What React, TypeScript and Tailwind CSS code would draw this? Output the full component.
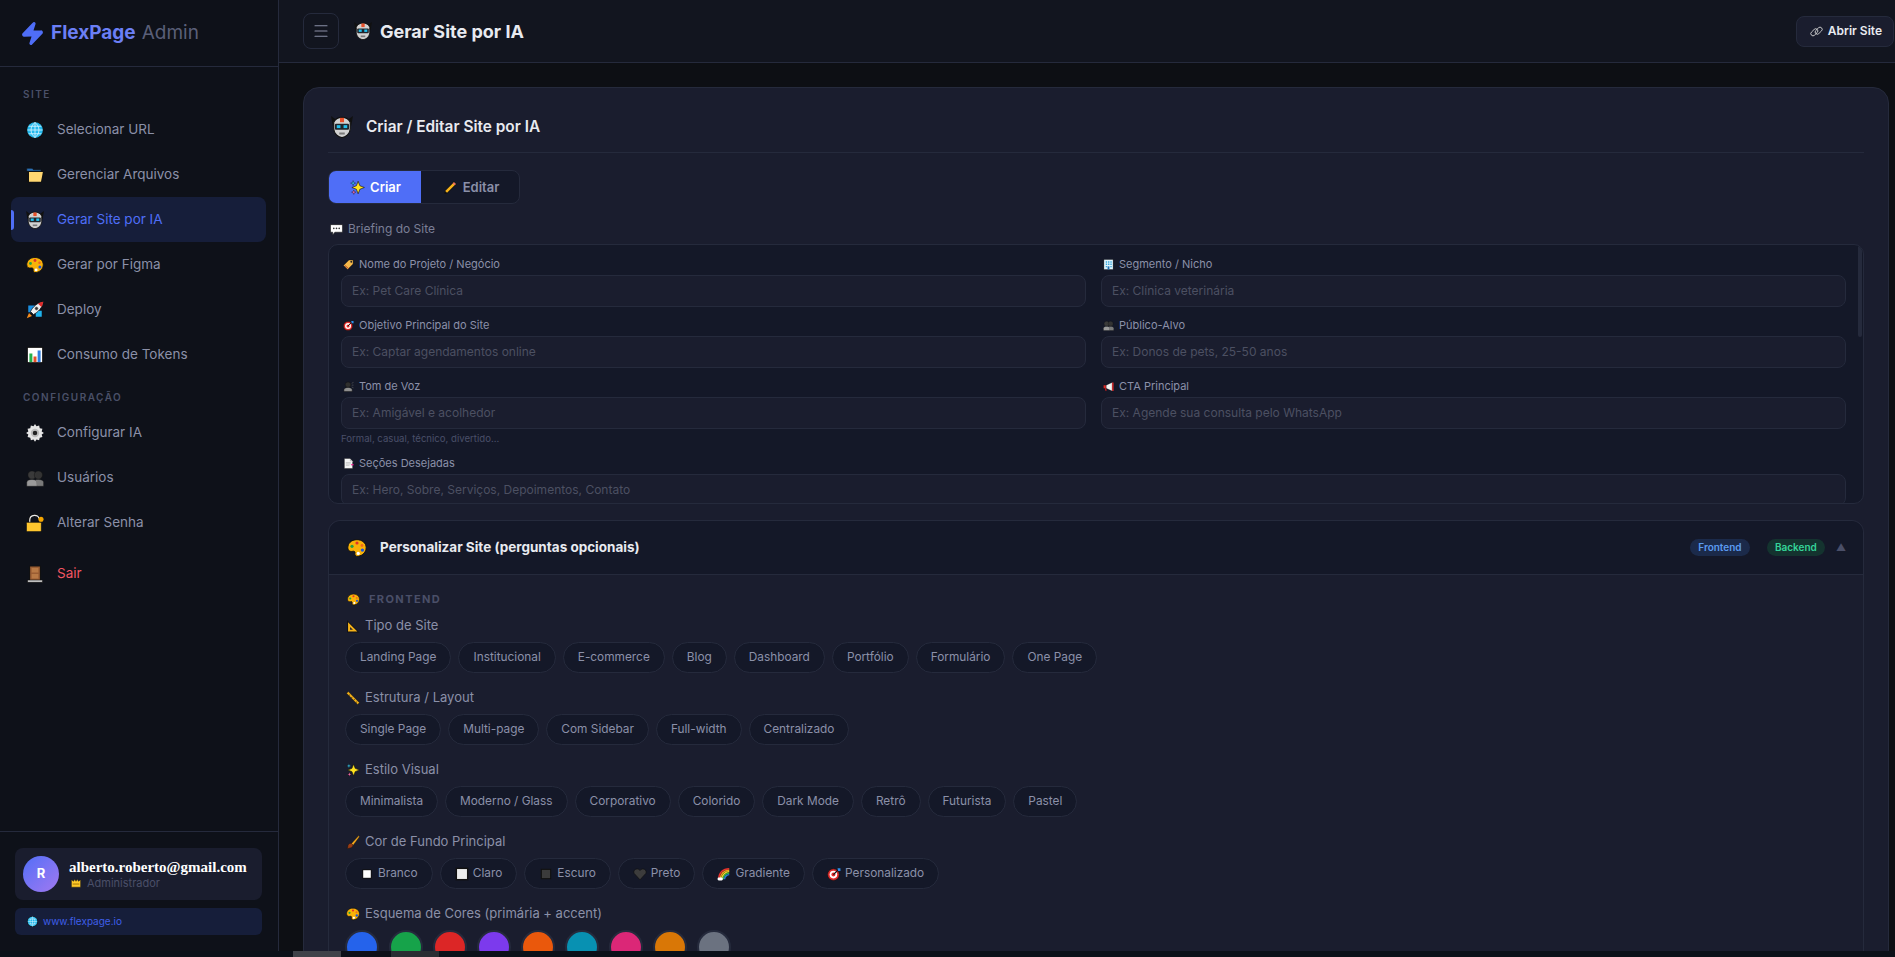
import React from 'react';
import { Zap, Menu } from 'lucide-react';

type IconName =
  | 'globe' | 'folder' | 'robot' | 'palette' | 'rocket' | 'chart' | 'gear' | 'users' | 'lock' | 'door'
  | 'crown' | 'sparkles' | 'pencil' | 'speech' | 'tag' | 'building' | 'target' | 'bust' | 'megaphone'
  | 'page' | 'triangle' | 'ruler' | 'brush' | 'heart' | 'white' | 'light' | 'dark' | 'rainbow' | 'link';

const drawings: Record<IconName, React.ReactNode> = {
  globe: (
    <>
      <circle cx="12" cy="12" r="11.5" fill="#111" />
      <circle cx="12" cy="12" r="10.5" fill="#22b8ec" />
      <path d="M2 12h20M3.5 7h17M3.5 17h17M12 2v20M12 2c-7 5-7 15 0 20M12 2c7 5 7 15 0 20" stroke="#d8f4ff" strokeWidth="1.1" fill="none" />
    </>
  ),
  folder: (
    <>
      <path d="M1 7V3h7l2 2h10v2z" fill="#2a6fb5" stroke="#111" strokeWidth=".8" />
      <path d="M1 22V7h3v14z" fill="#111" />
      <path d="M3 22V7h21l-3 15z" fill="#111" />
      <path d="M4 21V8h18.5L20 21z" fill="#ffd772" />
    </>
  ),
  robot: (
    <>
      <path d="M0 0L2 11 7 5zM24 0L22 11 17 5z" fill="#111" />
      <path d="M3 7c1.500-4 5-5.500 9-5.500S19.500 3 21 7v7c0 5-5 9.500-9 9.500S3 19 3 14z" fill="#d2d2d2" stroke="#111" strokeWidth="1.2" />
      <rect x="9.800" y="2" width="4.400" height="4.800" fill="#e8502a" />
      <rect x="4.300" y="8.500" width="15.400" height="6.500" rx="1.200" fill="#20242a" />
      <rect x="6.300" y="10" width="4" height="3.200" fill="#22c0ee" />
      <rect x="13.700" y="10" width="4" height="3.200" fill="#22c0ee" />
      <rect x="9" y="18" width="6" height="2.200" fill="#7a7a7a" />
    </>
  ),
  palette: (
    <>
      <path d="M12 2C5 2 1 6.500 1 11.500c0 4 3 5 5.500 4.500 2.500-.5 3.500.5 3 2.500-.5 2.500 1.500 4 4 3.500C19 21 23 17 23 11.500 23 6 18 2 12 2z" fill="#f9b208" stroke="#111" strokeWidth="1.2" />
      <circle cx="6" cy="10" r="1.9" fill="#25a244" />
      <circle cx="12" cy="6" r="1.9" fill="#e0352b" />
      <circle cx="18" cy="9" r="1.7" fill="#f06a1d" />
      <circle cx="18.5" cy="14.5" r="2" fill="#1e55d8" />
      <circle cx="13.5" cy="18.5" r="1.9" fill="#fff" />
    </>
  ),
  rocket: (
    <>
      <path d="M1 23l3-7 4 4z" fill="#f48b1d" />
      <rect x="3" y="6" width="9" height="9" fill="#1b8fe0" />
      <rect x="13" y="13" width="8" height="8" fill="#1fb3ec" />
      <path d="M6 14C9 8 15 2 23 1c-1 8-7 14-13 17z" fill="#f0f0f0" stroke="#111" strokeWidth="1" />
      <path d="M16 3.500C18 2 21 1.300 23 1c-.3 2-1 5-2.500 7z" fill="#df2a2a" />
      <circle cx="14" cy="10" r="2.200" fill="#333" stroke="#aaa" strokeWidth=".7" />
    </>
  ),
  chart: (
    <>
      <rect x="1" y="1" width="22" height="22" fill="#111" />
      <rect x="2.5" y="2.5" width="19" height="19" fill="#fff" />
      <rect x="4.5" y="10" width="4" height="11.5" fill="#22b14c" />
      <rect x="10" y="14" width="4" height="7.5" fill="#e5512b" />
      <rect x="15.5" y="6" width="4" height="15.5" fill="#2f7fe0" />
    </>
  ),
  gear: (
    <>
      <path d="M12 1l2 3 3.500-1 .8 3.600 3.600.8-1 3.500 3 2-3 2 1 3.500-3.600.8-.8 3.600-3.500-1-2 3-2-3-3.500 1-.8-3.600-3.600-.8 1-3.500-3-2 3-2-1-3.500 3.600-.8.800-3.600 3.500 1z" fill="#e6e6e6" transform="translate(0 -1)" />
      <circle cx="12" cy="12" r="5.6" fill="#bdbdbd" />
      <circle cx="12" cy="12" r="3" fill="#222" />
    </>
  ),
  users: (
    <>
      <circle cx="8" cy="8" r="5.5" fill="#3a3a3a" stroke="#111" strokeWidth=".6" />
      <circle cx="16.5" cy="8" r="5.5" fill="#333" stroke="#111" strokeWidth=".6" />
      <path d="M1 23v-5c0-3 3-4 7-4s7 1 7 4v5z" fill="#9a9a9a" stroke="#111" strokeWidth=".6" />
      <path d="M13 14.200c1-.2 2-.2 3.500-.2 4 0 7 1 7 4v5H15" fill="#7a7a7a" stroke="#111" strokeWidth=".6" />
    </>
  ),
  lock: (
    <>
      <path d="M5 12V8c0-8 12-8 12-2" fill="none" stroke="#111" strokeWidth="3.4" />
      <path d="M5 12V8c0-8 12-8 12-2" fill="none" stroke="#e9e9e9" strokeWidth="1.6" />
      <rect x="0.5" y="11" width="20" height="12.5" rx="1.5" fill="#ffc72e" stroke="#111" />
      <circle cx="20" cy="7" r="3.4" fill="#f5a500" />
    </>
  ),
  door: (
    <>
      <rect x="4" y="1" width="16" height="19" fill="#111" />
      <rect x="5.5" y="2" width="13" height="18" fill="#9a5d33" />
      <rect x="7.5" y="4" width="9" height="6" fill="#b87945" />
      <rect x="7.5" y="12" width="9" height="6" fill="#b87945" />
      <rect x="2" y="20" width="20" height="3" fill="#c9c9c9" stroke="#111" strokeWidth=".8" />
    </>
  ),
  crown: (
    <>
      <path d="M1 22V4l5 4 3-5 3 5 3-5 3 5 5-4v18z" fill="#ffc928" stroke="#111" strokeWidth="1" />
      <rect x="4" y="13" width="16" height="3" fill="#b8860b" />
    </>
  ),
  sparkles: (
    <>
      <path d="M13 2l2.800 7.200L23 12l-7.200 2.800L13 22l-2.800-7.200L3 12l7.200-2.800z" fill="#ffe21f" stroke="#111" strokeWidth="1" />
      <path d="M5 1l1 3 3 1-3 1-1 3-1-3-3-1 3-1z" fill="#39c7ee" stroke="#111" strokeWidth=".6" />
      <path d="M6 16l1 2.500 2.500 1-2.500 1-1 2.500-1-2.500-2.500-1 2.500-1z" fill="#f06aa8" stroke="#111" strokeWidth=".6" />
    </>
  ),
  pencil: (
    <>
      <path d="M17.500 2L22 6.500 7 21.500 2 22.500l1-5z" fill="#111" />
      <path d="M17.500 3.500l3 3L6.500 20.500l-3-3z" fill="#f6b21b" />
      <path d="M17.500 3.500l3 3-2 2-3-3z" fill="#ee6a6a" />
    </>
  ),
  speech: (
    <>
      <path d="M1 3h22v14H9l-4 5v-5H1z" fill="#fff" stroke="#111" strokeWidth="1" />
      <circle cx="7" cy="10" r="1.5" fill="#333" />
      <circle cx="12" cy="10" r="1.5" fill="#333" />
      <circle cx="17" cy="10" r="1.5" fill="#333" />
    </>
  ),
  tag: (
    <>
      <path d="M13 2h9v9L10 23 1 14z" fill="#f5b84a" stroke="#111" strokeWidth="1" />
      <circle cx="18" cy="6" r="2" fill="#222" />
      <path d="M4 14l8 7" stroke="#b23a2a" strokeWidth="2" />
    </>
  ),
  building: (
    <>
      <rect x="2" y="1" width="20" height="22" fill="#dff3fb" stroke="#111" strokeWidth=".8" />
      <path d="M6 5h3v3H6zM11 5h3v3h-3zM16 5h3v3h-3zM6 10h3v3H6zM11 10h3v3h-3zM16 10h3v3h-3zM6 15h3v3H6zM16 15h3v3h-3z" fill="#36a6dc" />
      <rect x="10" y="16" width="4" height="7" fill="#1d6fb0" />
    </>
  ),
  target: (
    <>
      <circle cx="11" cy="13" r="10" fill="#e12b2b" stroke="#111" strokeWidth="1" />
      <circle cx="11" cy="13" r="6.5" fill="#fff" />
      <circle cx="11" cy="13" r="3.4" fill="#e12b2b" />
      <path d="M11 13L21 3" stroke="#111" strokeWidth="2" />
      <path d="M18 2h5v5h-4z" fill="#2f8fe8" />
    </>
  ),
  bust: (
    <>
      <circle cx="11" cy="8" r="6" fill="#2f2f2f" stroke="#111" />
      <path d="M2 23v-4c0-3 4-5 9-5s9 2 9 5v4z" fill="#8f8f8f" stroke="#111" />
      <path d="M19 5l4-2M19 9h4M19 13l4 2" stroke="#666" strokeWidth="1.2" />
    </>
  ),
  megaphone: (
    <>
      <path d="M1 9h6v7H1z" fill="#e12b2b" stroke="#111" strokeWidth=".6" />
      <path d="M7 9l13-6v19L7 16z" fill="#f3f3f3" stroke="#111" strokeWidth=".6" />
      <path d="M20 3h3v19h-3z" fill="#e12b2b" />
      <path d="M4 16h3l1 5H5z" fill="#c41f1f" />
    </>
  ),
  page: (
    <>
      <path d="M3 1h12l6 6v16H3z" fill="#f4f4f4" stroke="#111" strokeWidth=".8" />
      <path d="M15 1l6 6h-6z" fill="#bdbdbd" />
      <path d="M6 10h11M6 13h11M6 16h8" stroke="#9a9a9a" strokeWidth="1" />
      <rect x="18" y="13" width="5" height="3" fill="#e91e8c" />
    </>
  ),
  triangle: (
    <>
      <path d="M2 2v21h21z" fill="#111" />
      <path d="M3.500 5.500v16h16z" fill="#f5b21a" />
      <path d="M7 13.500v5h5z" fill="#1c2030" />
    </>
  ),
  ruler: (
    <>
      <path d="M4 1L23 20l-3 3L1 4z" fill="#f5b21a" stroke="#111" strokeWidth=".8" />
      <path d="M7 6l-2 2M11 10l-2 2M15 14l-2 2M19 18l-2 2" stroke="#111" strokeWidth="1" />
    </>
  ),
  brush: (
    <>
      <path d="M22 1L9 15l3 3L23 3z" fill="#f5a81c" stroke="#111" strokeWidth=".6" />
      <path d="M9 14c-4 0-6 3-6 6l-1 3c4 0 10-1 10-6z" fill="#9a3d14" stroke="#111" strokeWidth=".8" />
    </>
  ),
  heart: (
    <path d="M12 22L2 11C-1 5 8 0 12 6c4-6 13-1 10 5z" fill="#3c3c3c" stroke="#111" strokeWidth="1.2" />
  ),
  white: (
    <>
      <rect x="4" y="4" width="16" height="16" fill="#111" />
      <rect x="5.5" y="5.5" width="13" height="13" fill="#fff" />
    </>
  ),
  light: (
    <>
      <rect x="1" y="1" width="22" height="22" fill="#111" />
      <rect x="3.5" y="3.5" width="17" height="17" fill="#ececec" />
    </>
  ),
  dark: (
    <>
      <rect x="3" y="3" width="18" height="18" fill="#111" />
      <rect x="5" y="5" width="14" height="14" fill="#3b3b3b" />
    </>
  ),
  rainbow: (
    <>
      <path d="M3 21C3 10 10 3 21 3" fill="none" stroke="#e8322c" strokeWidth="2.4" />
      <path d="M5.500 21C5.500 12 12 5.500 21 5.500" fill="none" stroke="#f5a21a" strokeWidth="2.4" />
      <path d="M8 21C8 14 14 8 21 8" fill="none" stroke="#f6e12a" strokeWidth="2.4" />
      <path d="M10.500 21C10.500 15.500 15.500 10.500 21 10.500" fill="none" stroke="#2fb54a" strokeWidth="2.4" />
      <path d="M13 21C13 17 17 13 21 13" fill="none" stroke="#2f7fe0" strokeWidth="2.4" />
      <rect x="1" y="18" width="9" height="5" rx="2" fill="#fff" />
    </>
  ),
  link: (
    <>
      <rect x="0.5" y="9.5" width="15" height="8" rx="4" transform="rotate(-45 8 13.5)" fill="none" stroke="#d6d6d6" strokeWidth="1.6" />
      <rect x="8.5" y="6.5" width="15" height="8" rx="4" transform="rotate(-45 16 10.5)" fill="none" stroke="#d6d6d6" strokeWidth="1.6" />
    </>
  ),
};

function Emoji({ name, className }: { name: IconName; className: string }) {
  return (
    <svg viewBox="0 0 24 24" className={`shrink-0 ${className}`}>
      {drawings[name]}
    </svg>
  );
}

function NavItem({ icon, label, active, danger }: { icon: IconName; label: string; active?: boolean; danger?: boolean }) {
  return (
    <div
      className={`relative flex h-[45px] items-center gap-[13px] rounded-lg pl-[15px] text-[13.5px] ${
        active ? 'bg-[#161e3a] text-[#4f6ef7]' : danger ? 'text-[#f25563]' : 'text-[#8b90a8]'
      }`}
    >
      {active && <span className="absolute left-0 top-[13px] h-[20px] w-[3px] rounded-r bg-[#4f6ef7]" />}
      <Emoji name={icon} className="size-[18px]" />
      {label}
    </div>
  );
}

function Sidebar() {
  return (
    <aside className="flex h-full w-[279px] shrink-0 flex-col border-r border-[#252a3c] bg-[#0e1119]">
      <div className="flex h-[67px] shrink-0 items-center gap-[6px] border-b border-[#252a3c] pl-[20px] pt-[1px]">
        <Zap className="size-[25px] fill-[#4f6ef7] text-[#4f6ef7]" />
        <span className="text-[19px] font-bold text-[#6b7ff5]">FlexPage</span>
        <span className="text-[19px] text-[#5a5f78]">Admin</span>
      </div>
      <nav className="flex flex-1 flex-col px-[11px] pr-[12px]">
        <p className="mb-[5px] ml-[12px] mt-[20px] text-[10px] font-semibold uppercase tracking-[1.5px] text-[#4a5068]">Site</p>
        <NavItem icon="globe" label="Selecionar URL" />
        <NavItem icon="folder" label="Gerenciar Arquivos" />
        <NavItem icon="robot" label="Gerar Site por IA" active />
        <NavItem icon="palette" label="Gerar por Figma" />
        <NavItem icon="rocket" label="Deploy" />
        <NavItem icon="chart" label="Consumo de Tokens" />
        <p className="mb-[5px] ml-[12px] mt-[13px] text-[10px] font-semibold uppercase tracking-[1.5px] text-[#4a5068]">Configuração</p>
        <NavItem icon="gear" label="Configurar IA" />
        <NavItem icon="users" label="Usuários" />
        <NavItem icon="lock" label="Alterar Senha" />
        <div className="mt-[6px]">
          <NavItem icon="door" label="Sair" danger />
        </div>
      </nav>
      <div className="flex h-[126px] shrink-0 flex-col gap-2 border-t border-[#252a3c] pl-[15px] pr-[16px] pt-4">
        <div className="flex h-[52px] items-center gap-[10px] rounded-lg bg-[#1a1d2e] pl-2">
          <div className="flex size-9 items-center justify-center rounded-full bg-gradient-to-br from-[#4f6ef7] to-[#a078f0] text-[13px] font-bold text-white">R</div>
          <div className="flex flex-col">
            <span className="font-['Liberation_Serif',serif] text-[15px] font-bold leading-[17px] text-white">alberto.roberto@gmail.com</span>
            <span className="flex items-center gap-[6px] pl-[2px] text-[11px] leading-[14px] text-[#4a4f68]">
              <Emoji name="crown" className="size-[10px]" />
              Administrador
            </span>
          </div>
        </div>
        <div className="flex h-[27px] items-center gap-[5px] rounded-md bg-[#161e3a] pl-3 text-[10px] text-[#3f5fe8]">
          <Emoji name="globe" className="size-[11px]" />
          www.flexpage.io
        </div>
      </div>
    </aside>
  );
}

function Field({ icon, label, placeholder, hint }: { icon: IconName; label: string; placeholder: string; hint?: string }) {
  return (
    <div className="flex flex-col">
      <label className="mb-[4px] flex h-[14px] items-center gap-[5px] pl-[2px] text-[11px] text-[#8b90a8]">
        <Emoji name={icon} className="size-[11px]" />
        {label}
      </label>
      <div className="flex h-[32px] items-center rounded-lg border border-[#252a3c] bg-[#1a1d2e] pl-[10px] text-[12px] text-[#4c5062]">
        {placeholder}
      </div>
      {hint && <span className="mt-[3px] h-[13px] text-[9.6px] leading-[13px] text-[#4a4f68]">{hint}</span>}
    </div>
  );
}

function Pill({ icon, label }: { icon?: IconName; label: string }) {
  return (
    <span className="flex h-[31px] items-center gap-[4px] rounded-full border border-[#252a3c] bg-[#141828] px-[14px] text-[11.85px] text-[#8b90a8]">
      {icon && <Emoji name={icon} className="size-[14px]" />}
      {label}
    </span>
  );
}

function GroupTitle({ icon, title }: { icon: IconName; title: string }) {
  return (
    <div className="mb-[8px] flex h-[16px] items-center gap-[5px] pl-px text-[13px] text-[#8b90a8]">
      <Emoji name={icon} className="size-[14px]" />
      {title}
    </div>
  );
}

function PillGroup({ icon, title, items }: { icon: IconName; title: string; items: string[] }) {
  return (
    <div className="mb-[17px]">
      <GroupTitle icon={icon} title={title} />
      <div className="flex gap-[7px]">
        {items.map((item) => (
          <Pill key={item} label={item} />
        ))}
      </div>
    </div>
  );
}

const backgrounds: [IconName, string][] = [
  ['white', 'Branco'],
  ['light', 'Claro'],
  ['dark', 'Escuro'],
  ['heart', 'Preto'],
  ['rainbow', 'Gradiente'],
  ['target', 'Personalizado'],
];

const swatches = ['bg-[#2563eb]', 'bg-[#16a34a]', 'bg-[#dc2626]', 'bg-[#7c3aed]', 'bg-[#ea580c]', 'bg-[#0891b2]', 'bg-[#db2777]', 'bg-[#d97706]', 'bg-[#6b7280]'];

export default function App() {
  return (
    <div className="relative flex h-screen w-full overflow-hidden bg-[#0d0f14] font-['Inter',sans-serif]">
      <Sidebar />
      <div className="flex h-full min-w-0 flex-1 flex-col">
        <header className="flex h-[63px] shrink-0 items-center border-b border-[#252a3c] bg-[#12151f] pl-6 pr-px">
          <button className="flex size-9 items-center justify-center rounded-lg border border-[#252a3c] text-[#8b90a8]">
            <Menu className="size-[18px]" strokeWidth={1.5} />
          </button>
          <Emoji name="robot" className="ml-[15px] size-[18px]" />
          <h1 className="ml-2 text-[18px] font-bold text-[#e8eaf0]">Gerar Site por IA</h1>
          <button className="ml-auto flex h-[31px] items-center gap-[5px] rounded-lg border border-[#252a3c] bg-[#1a1d2e] pl-[13px] pr-[11px] text-[12px] font-semibold text-[#e8eaf0]">
            <Emoji name="link" className="size-[13px]" />
            Abrir Site
          </button>
        </header>
        <main className="min-h-0 flex-1 overflow-hidden pl-6 pr-[6px] pt-6">
          <section className="rounded-2xl border border-[#252a3c] bg-[#1a1d2e] px-6 pt-[28px]">
            <div className="flex h-[22px] items-center gap-[13px] pl-[3px]">
              <Emoji name="robot" className="size-[22px]" />
              <h2 className="text-[15.4px] font-semibold text-[#e8eaf0]">Criar / Editar Site por IA</h2>
            </div>
            <div className="mt-[14px] border-t border-[#252a3c]" />
            <div className="mt-[17px] flex h-[34px] w-[192px] overflow-hidden rounded-lg border border-[#252a3c] bg-[#141828] pt-px text-[13px] font-semibold">
              <span className="-mt-px flex w-[92px] items-center justify-center gap-[5px] bg-[#4f6ef7] pl-px pt-px text-white">
                <Emoji name="sparkles" className="size-[15px]" />
                Criar
              </span>
              <span className="flex flex-1 items-center justify-center gap-[5px] pl-[2px] text-[#8b90a8]">
                <Emoji name="pencil" className="size-[15px]" />
                Editar
              </span>
            </div>
            <div className="mt-[17px] flex h-[16px] items-center gap-[5px] pl-[2px] text-[12px] text-[#7a7f96]">
              <Emoji name="speech" className="size-[13px]" />
              Briefing do Site
            </div>
            <div className="relative mt-[7px] h-[260px] overflow-hidden rounded-[10px] border border-[#252a3c] bg-[#141828] pl-[12px] pr-[17px] pt-[12px]">
              <span className="absolute right-px top-0 h-[92px] w-[4px] rounded bg-[#252a3c]" />
              <div className="grid grid-cols-[745px_1fr] gap-x-[15px] gap-y-[11px]">
                <Field icon="tag" label="Nome do Projeto / Negócio" placeholder="Ex: Pet Care Clínica" />
                <Field icon="building" label="Segmento / Nicho" placeholder="Ex: Clínica veterinária" />
                <Field icon="target" label="Objetivo Principal do Site" placeholder="Ex: Captar agendamentos online" />
                <Field icon="users" label="Público-Alvo" placeholder="Ex: Donos de pets, 25-50 anos" />
                <Field icon="bust" label="Tom de Voz" placeholder="Ex: Amigável e acolhedor" hint="Formal, casual, técnico, divertido..." />
                <Field icon="megaphone" label="CTA Principal" placeholder="Ex: Agende sua consulta pelo WhatsApp" />
                <div className="col-span-2">
                  <Field icon="page" label="Seções Desejadas" placeholder="Ex: Hero, Sobre, Serviços, Depoimentos, Contato" />
                </div>
              </div>
            </div>
            <div className="mt-[16px] rounded-t-xl border border-[#252a3c]">
              <div className="flex h-[54px] items-center rounded-t-xl border-b border-[#252a3c] bg-[#141828] pl-[18px] pr-[17px]">
                <Emoji name="palette" className="size-[20px]" />
                <h3 className="ml-[13px] text-[13.5px] font-bold text-[#e8eaf0]">Personalizar Site (perguntas opcionais)</h3>
                <span className="ml-auto flex h-[17px] w-[60px] items-center justify-center rounded-full bg-[#1b2a4a] text-[10px] font-semibold text-[#5b9bf0]">Frontend</span>
                <span className="ml-[17px] flex h-[17px] w-[58px] items-center justify-center rounded-full bg-[#14332f] text-[10px] font-semibold text-[#34d399]">Backend</span>
                <span className="ml-[11px] text-[10px] text-[#4a4f68]">▲</span>
              </div>
              <div className="pl-[16px] pt-[17px]">
                <div className="mb-[12px] flex h-[14px] items-center gap-[9px] pl-[2px] text-[11px] font-bold uppercase tracking-[1.4px] text-[#4a4f68]">
                  <Emoji name="palette" className="size-[13px]" />
                  Frontend
                </div>
                <PillGroup icon="triangle" title="Tipo de Site" items={['Landing Page', 'Institucional', 'E-commerce', 'Blog', 'Dashboard', 'Portfólio', 'Formulário', 'One Page']} />
                <PillGroup icon="ruler" title="Estrutura / Layout" items={['Single Page', 'Multi-page', 'Com Sidebar', 'Full-width', 'Centralizado']} />
                <PillGroup icon="sparkles" title="Estilo Visual" items={['Minimalista', 'Moderno / Glass', 'Corporativo', 'Colorido', 'Dark Mode', 'Retrô', 'Futurista', 'Pastel']} />
                <div className="mb-[17px]">
                  <GroupTitle icon="brush" title="Cor de Fundo Principal" />
                  <div className="flex gap-[7px]">
                    {backgrounds.map(([icon, label]) => (
                      <Pill key={label} icon={icon} label={label} />
                    ))}
                  </div>
                </div>
                <GroupTitle icon="palette" title="Esquema de Cores (primária + accent)" />
                <div className="flex gap-[10px]">
                  {swatches.map((color) => (
                    <span key={color} className={`size-[34px] rounded-full border-2 border-[#252a3c] ${color}`} />
                  ))}
                </div>
              </div>
            </div>
          </section>
        </main>
      </div>
      <div className="absolute bottom-0 left-0 flex h-[6px] w-full bg-[#0b1119]">
        <span className="ml-[293px] w-[48px] bg-[#3f4249]" />
        <span className="w-[50px] bg-[#0d1018]" />
        <span className="w-[48px] bg-[#2a2d33]" />
      </div>
    </div>
  );
}
